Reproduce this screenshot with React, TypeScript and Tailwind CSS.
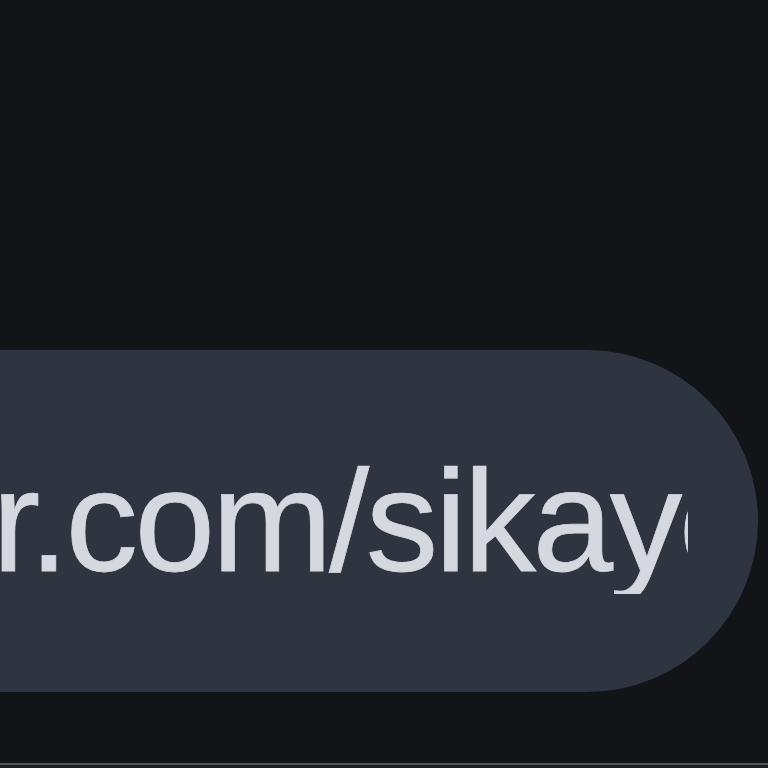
export default function App() {
  return (
    <div className="h-[768px] w-[768px] overflow-hidden bg-[#131418] flex flex-col" style={{ fontFamily: '"Liberation Sans", Arial, sans-serif' }}>
      <div className="h-[350px] shrink-0" />
      {/* address bar, zoomed in */}
      <div className="h-[342px] w-[758px] shrink-0 rounded-r-full bg-[#2e3440] flex items-center pr-[70px]">
        <div className="flex-1 overflow-hidden whitespace-nowrap">
          <span className="block -ml-[8px] text-[145px] leading-none tracking-[-3.5px] text-[#d5d8df] [-webkit-text-stroke:0.75px_#d5d8df]">
            r.com/sikayo
          </span>
        </div>
      </div>
      <div className="flex-1" />
      <div className="h-[2px] bg-[#55575c]" />
      <div className="h-[3px] bg-[#1c1d21]" />
    </div>
  );
}
